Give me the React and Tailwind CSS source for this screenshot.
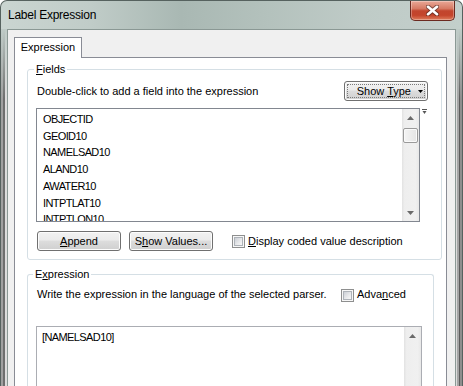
import React from "react";

const fields = ["OBJECTID", "GEOID10", "NAMELSAD10", "ALAND10", "AWATER10", "INTPTLAT10", "INTPTLON10"];

function Tri({ down }) {
  return (
    <svg width="7" height="4" viewBox="0 0 7 4" className="block">
      <path d={down ? "M0 0H7L3.5 4Z" : "M0 4H7L3.5 0Z"} fill="#6a6a6a" />
    </svg>
  );
}

function Check({ className = "" }) {
  return (
    <span className={"block w-[13px] h-[13px] shrink-0 border border-[#8e8f8f] bg-[#f7f7f7] p-px " + className}>
      <span className="block w-[9px] h-[9px] border border-[#aeb3b9] bg-[linear-gradient(135deg,#cbcfd5,#e9eaec_60%,#f7f7f7)]" />
    </span>
  );
}

function Btn({ children, className = "" }) {
  return (
    <div
      className={
        "relative h-[20px] w-[84px] shrink-0 rounded-[3px] border border-[#707070] bg-[linear-gradient(#f2f2f2,#ebebeb_45%,#dddddd_50%,#cfcfcf)] shadow-[inset_0_0_0_1px_#fcfcfc] flex items-center " +
        className
      }
    >
      {children}
    </div>
  );
}

function CloseButton() {
  return (
    <div className="mr-[7px] w-[45px] h-[20px] rounded-b-[5px] border border-t-0 border-[#6b2a20] bg-[linear-gradient(#e9a897,#d67a64_40%,#c2452d_52%,#c4442b_75%,#de7c5c)] shadow-[inset_0_0_0_1px_rgba(255,255,255,0.3)] flex items-center justify-center">
      <svg width="13" height="11" viewBox="0 0 13 11">
        <path d="M2 1.8L11 9.2M11 1.8L2 9.2" stroke="#3b2320" strokeWidth="4.6" strokeLinecap="round" opacity="0.55" />
        <path d="M2 1.8L11 9.2M11 1.8L2 9.2" stroke="#ffffff" strokeWidth="2.6" strokeLinecap="round" />
      </svg>
    </div>
  );
}

function ScrollTrack({ children }) {
  return (
    <div className="w-[17px] shrink-0 h-full bg-[linear-gradient(to_right,#e2e2e2,#eeeeee_15%,#f0f0f0_80%,#e8e8e8)] flex flex-col items-center">
      {children}
    </div>
  );
}

export default function App() {
  return (
    <div className="w-[463px] h-[386px] overflow-hidden flex flex-col rounded-t-[7px] border border-b-0 border-[#56625f] bg-[linear-gradient(to_right,#cad5d1,#c0ccc8_90px,#a9b8b3_180px,#b3c1bc_260px,#bfcbc7_360px,#c3cfcb)] font-['Liberation_Sans',Arial,sans-serif] text-[11px] text-black">
      {/* title bar */}
      <div className="h-[28px] shrink-0 flex items-start justify-between">
        <div className="pl-[7px] pt-[7px] text-[12px] leading-[15px] tracking-[-0.25px]">Label Expression</div>
        <CloseButton />
      </div>

      <div className="flex flex-1 min-h-0">
        <div className="w-[6px] shrink-0 bg-[linear-gradient(#bfcbc7,rgba(191,203,199,0)_70px),linear-gradient(to_right,#a0a0a0_0_2px,#6e6e6e_2px_4px,#dcdcdc_4px_6px)]" />

        {/* client area */}
        <div className="flex-1 min-w-0 bg-[#f0f0f0] border border-b-0 border-[#8a9894] pt-[7px] pl-[6px] pr-[8px] flex flex-col">
          <div className="flex">
            <div className="relative z-10 -mb-px w-[68px] h-[21px] border border-b-0 border-[#898c95] bg-white text-center leading-[15px] pt-[2px]">
              Expression
            </div>
          </div>

          <div className="flex-1 flex flex-col border border-b-0 border-[#898c95] bg-white pt-[4px] px-[12px]">
            {/* Fields group */}
            <fieldset className="border border-[#d5dfe5] rounded-[3px] pl-[9px] pr-[13px] pb-[8px]">
              <legend className="-ml-[3px] px-[2px] leading-[15px]">
                <u>F</u>ields
              </legend>
              <div className="mt-[4px] h-[20px] flex items-center justify-between">
                <span>Double-click to add a field into the expression</span>
                <Btn className="justify-end pr-[4px]">
                  <span className="absolute inset-[2px] border border-dotted border-[#7a7a7a]" />
                  <span>
                    Show <u>T</u>ype
                  </span>
                  <svg width="5" height="3" viewBox="0 0 5 3" className="ml-[7px]">
                    <path d="M0 0H5L2.5 3Z" fill="#000" />
                  </svg>
                </Btn>
              </div>

              <div className="mt-[7px] flex items-start">
                <div className="-ml-px w-[384px] h-[114px] shrink-0 border border-[#828790] bg-white flex">
                  <div className="flex-1 overflow-hidden pt-[2px] pl-[6px] leading-[16.7px] tracking-[-0.6px]">
                    {fields.map((f) => (
                      <div key={f}>{f}</div>
                    ))}
                  </div>
                  <ScrollTrack>
                    <div className="h-[17px] shrink-0 flex items-center justify-center">
                      <Tri />
                    </div>
                    <div className="mt-[2px] w-[15px] h-[15px] shrink-0 rounded-[2px] border border-[#9a9a9a] bg-[linear-gradient(to_right,#f4f4f4,#e4e4e4)] shadow-[inset_0_0_0_1px_#fafafa]" />
                    <div className="flex-1" />
                    <div className="h-[17px] shrink-0 flex items-center justify-center">
                      <Tri down />
                    </div>
                  </ScrollTrack>
                </div>
                <svg width="6" height="6" viewBox="0 0 6 6" className="ml-[2px] mt-[1px] shrink-0">
                  <path d="M0 0.5H5" stroke="#555" />
                  <path d="M0.5 2H4.5L2.5 5Z" fill="#555" />
                </svg>
              </div>

              <div className="mt-[9px] flex items-center">
                <Btn className="justify-center">
                  <span>
                    <u>A</u>ppend
                  </span>
                </Btn>
                <Btn className="ml-[8px] justify-center">
                  <span>
                    S<u>h</u>ow Values...
                  </span>
                </Btn>
                <Check className="ml-[19px]" />
                <span className="ml-[3px]">
                  <u>D</u>isplay coded value description
                </span>
              </div>
            </fieldset>

            {/* Expression group */}
            <fieldset className="mt-[7px] flex-1 border border-b-0 border-[#d5dfe5] rounded-t-[3px] pl-[9px] pr-[11px]">
              <legend className="-ml-[4px] px-[2px] leading-[15px]">
                E<u>x</u>pression
              </legend>
              <div className="mt-[5px] h-[15px] flex items-start leading-[15px]">
                <span className="w-[304px] shrink-0">Write the expression in the language of the selected parser.</span>
                <Check className="mt-[2px]" />
                <span className="ml-[3px]">
                  Adva<u>n</u>ced
                </span>
              </div>
              <div className="mt-[24px] -ml-px w-[386px] h-[80px] border border-[#abadb3] bg-white flex">
                <div className="flex-1 pl-[5px] pt-[3px] leading-[15px] tracking-[-0.6px]">[NAMELSAD10]</div>
                <ScrollTrack>
                  <div className="h-[17px] shrink-0 flex items-center justify-center">
                    <Tri />
                  </div>
                </ScrollTrack>
              </div>
            </fieldset>
          </div>
        </div>

        <div className="w-[6px] shrink-0 bg-[linear-gradient(#bfcbc7,rgba(191,203,199,0)_70px),linear-gradient(to_right,#dcdcdc_0_1px,#a5a5a5_1px_3px,#5c5c5c_3px_4px,#8e8e8e_4px_6px)]" />
      </div>
    </div>
  );
}
